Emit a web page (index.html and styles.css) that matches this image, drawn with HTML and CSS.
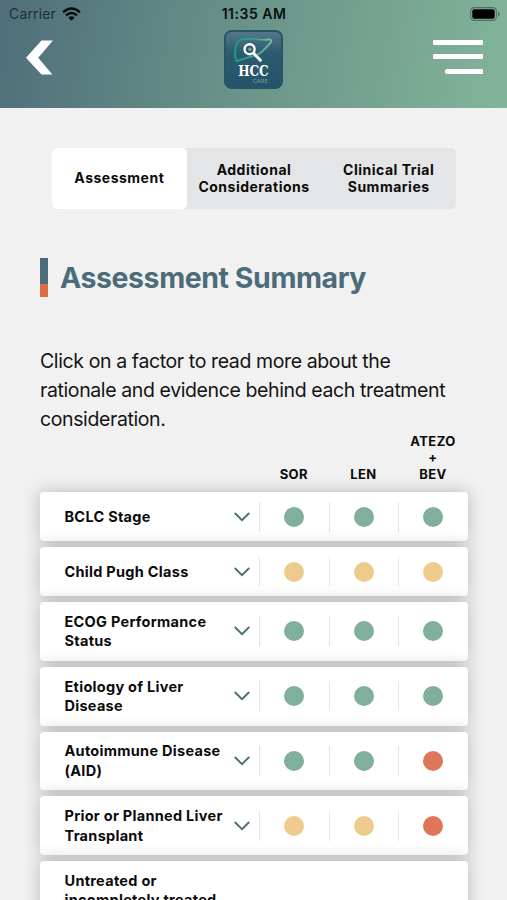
FILE: index.html
```html
<!DOCTYPE html>
<html lang="en">
<head>
<meta charset="utf-8">
<title>Assessment Summary</title>
<link rel="stylesheet" href="styles.css">
</head>
<body>
<header class="header">
  <div class="status">
    <div class="carrier"><span>Carrier</span>
      <svg width="19" height="14" viewBox="0 0 19 14"><g fill="none" stroke="#060c0d" stroke-width="2.3"><path d="M1.1 5.3Q9.5-2.2 17.9 5.3"/><path d="M4 8.4Q9.5 3.6 15 8.4"/></g><path d="M6.3 10.5Q9.5 7.9 12.7 10.5L9.5 13.8Z" fill="#060c0d"/></svg>
    </div>
    <span class="time">11:35 AM</span>
    <svg class="battery" width="31" height="14" viewBox="0 0 31 14"><rect x=".6" y=".6" width="25.8" height="12.8" rx="3.6" fill="none" stroke="#4d6f62" stroke-width="1.1"/><rect x="2.3" y="2.3" width="22.4" height="9.4" rx="2" fill="#000"/><path d="M28 4.5Q31.5 7 28 9.5Z" fill="#4d6f62"/></svg>
  </div>
  <nav class="nav">
    <svg class="back" width="27" height="35" viewBox="0 0 27 35"><path d="M15.5 0.5H27L12.2 17.8L26.3 34.5H15.5L0 17.8Z" fill="#fff"/></svg>
    <svg class="logo" width="60" height="60" viewBox="0 0 60 60">
      <defs>
        <linearGradient id="tile" x1="0" y1="0" x2="0" y2="1"><stop offset="0" stop-color="#55798b"/><stop offset=".38" stop-color="#2d5a6e"/><stop offset="1" stop-color="#23536a"/></linearGradient>
        <linearGradient id="liver"><stop offset="0" stop-color="#16a18d"/><stop offset=".55" stop-color="#3a9d91"/><stop offset="1" stop-color="#83bd9c"/></linearGradient>
      </defs>
      <rect x="1" y="1" width="57" height="57" rx="6.5" fill="url(#tile)" stroke="#275568" stroke-width="2"/>
      <path d="M19 9.2C29 7.5 37 11 44.5 9.5C48.5 9.2 47.5 12 45 14.5L37.5 22C33 26.5 28 26 24 27.5C20 29 15 31 12.4 31C10.8 27 11 20 12 15.5C13 11.5 15 9.7 19 9.2Z" fill="none" stroke="url(#liver)" stroke-width="1.8"/>
      <circle cx="25.6" cy="19.2" r="5" fill="#2d5a6e" stroke="#fff" stroke-width="2.4"/><circle cx="25.9" cy="19.3" r="1.7" fill="#76a9a4"/>
      <path d="M29.6 23.2L36.4 30.2" stroke="#fff" stroke-width="3" stroke-linecap="round"/>
      <text x="14.2" y="46.1" class="logo-name" textLength="30.5" lengthAdjust="spacingAndGlyphs">HCC</text>
      <text x="28.8" y="52.8" class="logo-sub" textLength="15" lengthAdjust="spacingAndGlyphs">CARE</text>
    </svg>
    <div class="menu"><i></i><i></i><i></i></div>
  </nav>
</header>
<main class="content">
  <div class="tabs">
    <div class="tab active">Assessment</div>
    <div class="tab">Additional<br>Considerations</div>
    <div class="tab">Clinical Trial<br>Summaries</div>
  </div>
  <h1 class="title">Assessment Summary</h1>
  <p class="intro">Click on a factor to read more about the<br>rationale and evidence behind each treatment<br>consideration.</p>
  <div class="columns"><span></span><span>SOR</span><span>LEN</span><span>ATEZO<br>+<br>BEV</span></div>
  <div class="factors">
    <div class="row"><div class="label">BCLC Stage</div><svg class="chev" viewBox="0 0 16 10"><path d="M1.3 1.5L8 8.1L14.7 1.5"/></svg><div class="cell"><b class="dot green"></b></div><div class="cell"><b class="dot green"></b></div><div class="cell"><b class="dot green"></b></div></div>
    <div class="row"><div class="label">Child Pugh Class</div><svg class="chev" viewBox="0 0 16 10"><path d="M1.3 1.5L8 8.1L14.7 1.5"/></svg><div class="cell"><b class="dot yellow"></b></div><div class="cell"><b class="dot yellow"></b></div><div class="cell"><b class="dot yellow"></b></div></div>
    <div class="row tall"><div class="label">ECOG Performance<br>Status</div><svg class="chev" viewBox="0 0 16 10"><path d="M1.3 1.5L8 8.1L14.7 1.5"/></svg><div class="cell"><b class="dot green"></b></div><div class="cell"><b class="dot green"></b></div><div class="cell"><b class="dot green"></b></div></div>
    <div class="row tall"><div class="label">Etiology of Liver<br>Disease</div><svg class="chev" viewBox="0 0 16 10"><path d="M1.3 1.5L8 8.1L14.7 1.5"/></svg><div class="cell"><b class="dot green"></b></div><div class="cell"><b class="dot green"></b></div><div class="cell"><b class="dot green"></b></div></div>
    <div class="row tall"><div class="label">Autoimmune Disease<br>(AID)</div><svg class="chev" viewBox="0 0 16 10"><path d="M1.3 1.5L8 8.1L14.7 1.5"/></svg><div class="cell"><b class="dot green"></b></div><div class="cell"><b class="dot green"></b></div><div class="cell"><b class="dot red"></b></div></div>
    <div class="row tall"><div class="label">Prior or Planned Liver<br>Transplant</div><svg class="chev" viewBox="0 0 16 10"><path d="M1.3 1.5L8 8.1L14.7 1.5"/></svg><div class="cell"><b class="dot yellow"></b></div><div class="cell"><b class="dot yellow"></b></div><div class="cell"><b class="dot red"></b></div></div>
    <div class="row last"><div class="label">Untreated or<br>incompletely treated</div></div>
  </div>
</main>
</body>
</html>
```
FILE: styles.css
```css
* { box-sizing: border-box; }
body { margin: 0; height: 900px; overflow: hidden; background: #f1f1f1; color: #0b0b0b; font-family: Inter, "Liberation Sans", sans-serif; }
svg { display: block; flex: none; }
.header { height: 108px; background: linear-gradient(100deg, #4f6e7a 0%, #6a9389 48%, #82b49a 100%); }
.status { display: grid; grid-template-columns: 1fr auto 1fr; height: 27px; align-items: center; padding: 0 6px 0 7px; color: #10191b; font-size: 14px; }
.carrier { display: flex; gap: 6px; align-items: center; padding-left: 2px; letter-spacing: .15px; color: #1f3035; }
.time { color: #071012; font-weight: 600; font-size: 14px; letter-spacing: .5px; }
.battery { justify-self: end; }
.nav { display: grid; grid-template-columns: 1fr auto 1fr; align-items: start; padding: 3px 24px 0 26px; }
.back { margin-top: 9.5px; }
.logo { margin-left: -1px; }
.logo-name { font: 700 14.4px "DejaVu Serif", serif; fill: #fff; }
.logo-sub { font: 5.2px Inter, sans-serif; fill: #6aa093; }
.menu { display: flex; flex-direction: column; align-items: flex-end; gap: 9.5px; padding-top: 9.5px; }
.menu i { width: 50px; height: 5.2px; border-radius: 1px; background: #fff; }
.menu i:last-child { width: 38px; border-radius: 2px 1px 1px 2px; }
.content { padding: 40px 39.5px 0 40px; }
.tabs { display: grid; grid-template-columns: repeat(3, 1fr); width: 404px; height: 61px; margin-left: 12px; background: #e3e5e6; border-radius: 5px; }
.tab { display: flex; align-items: center; justify-content: center; padding-bottom: 1px; text-align: center; font-weight: 700; font-size: 14px; line-height: 17.5px; letter-spacing: .5px; border-radius: 5px; }
.active { background: #fff; }
.title { display: flex; align-items: center; height: 40px; margin: 48px 0 0; font-size: 28.5px; font-weight: 700; color: #4c6c79; letter-spacing: -.44px; white-space: nowrap; }
.title::before { content: ""; width: 8px; height: 39px; margin-right: 12px; background: linear-gradient(#4c6c79 66%, #dc6c43 66%); }
.intro { margin: 50px 0 0; font-size: 19.5px; line-height: 29.2px; letter-spacing: -.39px; white-space: nowrap; color: #141414; }
.columns { display: grid; grid-template-columns: 219px 69.6px 69.6px 69.6px; align-items: end; height: 48.6px; margin-top: -1.4px; text-align: center; font-size: 13px; line-height: 16.2px; font-weight: 650; letter-spacing: .4px; }
.factors { display: flex; flex-direction: column; gap: 6px; margin-top: 10.2px; }
.row { display: grid; grid-template-columns: 193.5px 25.5px 1fr 1fr 1fr; align-items: center; flex: none; height: 49px; border-radius: 4px; background: #fff; box-shadow: 0 0 18px rgba(0, 0, 0, .23); }
.tall { height: 58.75px; }
.label { padding-left: 24.5px; font-size: 14.5px; line-height: 19.4px; font-weight: 700; letter-spacing: .28px; white-space: nowrap; }
.chev { width: 16px; height: 10px; fill: none; stroke: #4c6c76; stroke-width: 1.9; stroke-linecap: round; }
.cell { display: flex; height: 30px; align-items: center; justify-content: center; border-left: 1.5px solid #e5e5e5; }
.dot { width: 20px; height: 20px; border-radius: 50%; }
.green { background: #80af9b; }
.yellow { background: #efca8d; }
.red { background: #de765a; }
.last { height: 78px; align-items: start; padding-top: 10px; }
```
